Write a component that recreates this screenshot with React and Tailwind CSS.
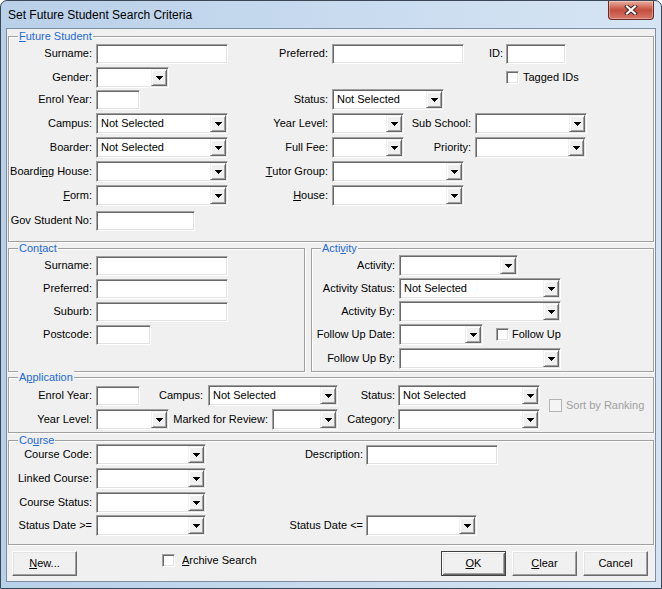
import React from 'react'

// classic 3D frames
const sunken =
  'border border-t-[#a0a0a0] border-l-[#a0a0a0] border-r-white border-b-white shadow-[inset_1px_1px_0_#696969,inset_-1px_-1px_0_#e3e3e3]'
const raised =
  'border border-t-[#f0f0f0] border-l-[#f0f0f0] border-r-[#696969] border-b-[#696969] shadow-[inset_1px_1px_0_#fff,inset_-1px_-1px_0_#a0a0a0]'
const buttonFrame =
  'border border-t-white border-l-white border-r-[#696969] border-b-[#696969] shadow-[inset_-1px_-1px_0_#a0a0a0,inset_1px_1px_0_#e3e3e3]'
const defaultFrame =
  'border border-[#404040] shadow-[inset_1px_1px_0_#fff,inset_-1px_-1px_0_#696969,inset_2px_2px_0_#e3e3e3,inset_-2px_-2px_0_#a0a0a0]'

function DownArrow() {
  return (
    <svg width="7" height="4" viewBox="0 0 7 4" shapeRendering="crispEdges" className="block">
      <path d="M0 0h7v1h-1v1h-1v1h-1v1h-1v-1h-1v-1h-1v-1h-1z" fill="#000" />
    </svg>
  )
}

function CloseGlyph() {
  return (
    <svg width="14" height="10" viewBox="0 0 14 10" className="block">
      <path d="M3 1.5L11 8.5M11 1.5L3 8.5" stroke="#3d2420" strokeWidth="4" strokeLinecap="square" />
      <path d="M3 1.5L11 8.5M11 1.5L3 8.5" stroke="#fff" strokeWidth="2.2" strokeLinecap="square" />
    </svg>
  )
}

function TextBox({ w }) {
  return <div className={`${w} h-[20px] shrink-0 bg-white ${sunken}`} />
}

function Combo({ w, value }) {
  return (
    <div className={`${w} h-[21px] shrink-0 bg-white p-px flex ${sunken}`}>
      <span className="flex-1 min-w-0 pl-[3px] flex items-center whitespace-nowrap overflow-hidden">
        {value}
      </span>
      <span className={`w-[16px] shrink-0 bg-[#f0f0f0] flex items-center justify-center ${raised}`}>
        <DownArrow />
      </span>
    </div>
  )
}

function Check({ disabled }) {
  if (disabled) {
    return <span className="w-[13px] h-[13px] shrink-0 border border-[#b4b4b4] bg-[#f4f4f4]" />
  }
  return <span className={`w-[13px] h-[13px] shrink-0 bg-white ${sunken}`} />
}

function Lbl({ w, pr = 'pr-[4px]', children }) {
  return (
    <span className={`${w} ${pr} shrink-0 flex justify-end whitespace-nowrap`}>{children}</span>
  )
}

function Row({ mt, children }) {
  return <div className={`flex items-center h-[21px] ${mt}`}>{children}</div>
}

function Group({ title, className, children }) {
  return (
    <div
      className={`relative border border-[#a0a0a0] shadow-[inset_1px_1px_0_#fff,1px_1px_0_#fff] ${className}`}
    >
      <span className="absolute -top-[7px] left-[9px] px-[1px] bg-[#f0f0f0] text-[#1e6ad6] leading-[13px] whitespace-nowrap">
        {title}
      </span>
      {children}
    </div>
  )
}

function Btn({ def, className = '', children }) {
  return (
    <div
      className={`w-[65px] h-[25px] shrink-0 flex items-center justify-center bg-[#f0f0f0] ${
        def ? defaultFrame : buttonFrame
      } ${className}`}
    >
      <span>{children}</span>
    </div>
  )
}

export default function App() {
  return (
    <div className="w-[662px] h-[589px] rounded-t-[7px] border border-[#3b4656] bg-linear-to-r from-[#b9d0e9] to-[#d6e5f4] px-[5px] pb-[6px] flex flex-col font-['Liberation_Sans',Arial,sans-serif] text-[11px] text-black">
      {/* Title bar */}
      <div className="h-[27px] shrink-0 flex items-start justify-between">
        <span className="pl-[2px] mt-[6px] leading-[16px] text-[12px] font-['Segoe_UI','Liberation_Sans',sans-serif] whitespace-nowrap">
          Set Future Student Search Criteria
        </span>
        <div className="mr-[2px] w-[46px] h-[19px] rounded-b-[4px] border border-t-0 border-[#6b2a22] bg-linear-to-b from-[#e7ad9f] via-[#c44e3e] to-[#d7786a] shadow-[inset_0_0_0_1px_rgba(255,255,255,0.3)] flex items-center justify-center">
          <CloseGlyph />
        </div>
      </div>

      {/* Client area */}
      <div className="flex-1 border border-[#7d8ea3] bg-[#f0f0f0] flex flex-col">
        {/* Future Student */}
        <Group
          title={
            <>
              <u>F</u>uture Student
            </>
          }
          className="mt-[7px] mx-[1px] h-[206px]"
        >
          <Row mt="mt-[6px]">
            <Lbl w="w-[87px]">Surname:</Lbl>
            <TextBox w="w-[132px]" />
            <Lbl w="w-[104px]">Preferred:</Lbl>
            <TextBox w="w-[132px]" />
            <Lbl w="w-[42px]" pr="pr-[3px]">ID:</Lbl>
            <TextBox w="w-[60px]" />
          </Row>
          <Row mt="mt-[3px]">
            <Lbl w="w-[87px]">Gender:</Lbl>
            <Combo w="w-[73px]" />
            <span className="ml-[337px] flex items-center">
              <Check />
              <span className="ml-[4px] whitespace-nowrap">Tagged IDs</span>
            </span>
          </Row>
          <Row mt="mt-[1px]">
            <Lbl w="w-[87px]">Enrol Year:</Lbl>
            <TextBox w="w-[44px]" />
            <Lbl w="w-[192px]">Status:</Lbl>
            <Combo w="w-[112px]" value="Not Selected" />
          </Row>
          <Row mt="mt-[3px]">
            <Lbl w="w-[87px]">Campus:</Lbl>
            <Combo w="w-[132px]" value="Not Selected" />
            <Lbl w="w-[104px]">Year Level:</Lbl>
            <Combo w="w-[72px]" />
            <Lbl w="w-[71px]">Sub School:</Lbl>
            <Combo w="w-[112px]" />
          </Row>
          <Row mt="mt-[3px]">
            <Lbl w="w-[87px]">Boarder:</Lbl>
            <Combo w="w-[132px]" value="Not Selected" />
            <Lbl w="w-[104px]">Full Fee:</Lbl>
            <Combo w="w-[72px]" />
            <Lbl w="w-[71px]">Priority:</Lbl>
            <Combo w="w-[111px]" />
          </Row>
          <Row mt="mt-[3px]">
            <Lbl w="w-[87px]">
              Boardi<u>n</u>g House:
            </Lbl>
            <Combo w="w-[132px]" />
            <Lbl w="w-[104px]">
              <u>T</u>utor Group:
            </Lbl>
            <Combo w="w-[132px]" />
          </Row>
          <Row mt="mt-[3px]">
            <Lbl w="w-[87px]">
              <u>F</u>orm:
            </Lbl>
            <Combo w="w-[132px]" />
            <Lbl w="w-[104px]">
              <u>H</u>ouse:
            </Lbl>
            <Combo w="w-[132px]" />
          </Row>
          <Row mt="mt-[4px]">
            <Lbl w="w-[87px]">Gov Student No:</Lbl>
            <TextBox w="w-[99px]" />
          </Row>
        </Group>

        {/* Contact + Activity */}
        <div className="mt-[6px] mx-[1px] flex">
          <Group
            title={
              <>
                Con<u>t</u>act
              </>
            }
            className="w-[297px] h-[124px] shrink-0"
          >
            <Row mt="mt-[6px]">
              <Lbl w="w-[87px]">Surname:</Lbl>
              <TextBox w="w-[132px]" />
            </Row>
            <Row mt="mt-[2px]">
              <Lbl w="w-[87px]">Preferred:</Lbl>
              <TextBox w="w-[132px]" />
            </Row>
            <Row mt="mt-[2px]">
              <Lbl w="w-[87px]">Suburb:</Lbl>
              <TextBox w="w-[132px]" />
            </Row>
            <Row mt="mt-[2px]">
              <Lbl w="w-[87px]">Postcode:</Lbl>
              <TextBox w="w-[55px]" />
            </Row>
          </Group>
          <Group
            title={
              <>
                Acti<u>v</u>ity
              </>
            }
            className="ml-[6px] flex-1 h-[124px]"
          >
            <Row mt="mt-[6px]">
              <Lbl w="w-[87px]">Activity:</Lbl>
              <Combo w="w-[119px]" />
            </Row>
            <Row mt="mt-[2px]">
              <Lbl w="w-[87px]">Activity Status:</Lbl>
              <Combo w="w-[162px]" value="Not Selected" />
            </Row>
            <Row mt="mt-[2px]">
              <Lbl w="w-[87px]">Activity By:</Lbl>
              <Combo w="w-[162px]" />
            </Row>
            <Row mt="mt-[2px]">
              <Lbl w="w-[87px]">Follow Up Date:</Lbl>
              <Combo w="w-[84px]" />
              <span className="ml-[13px] flex items-center">
                <Check />
                <span className="ml-[3px] whitespace-nowrap">Follow Up</span>
              </span>
            </Row>
            <Row mt="mt-[3px]">
              <Lbl w="w-[87px]">Follow Up By:</Lbl>
              <Combo w="w-[162px]" />
            </Row>
          </Group>
        </div>

        {/* Application */}
        <Group
          title={
            <>
              A<u>p</u>plication
            </>
          }
          className="mt-[5px] mx-[1px] h-[56px] flex items-start"
        >
          <div className="flex flex-col">
            <Row mt="mt-[7px]">
              <Lbl w="w-[87px]">Enrol Year:</Lbl>
              <TextBox w="w-[44px]" />
              <Lbl w="w-[68px]" pr="pr-[5px]">Campus:</Lbl>
              <Combo w="w-[130px]" value="Not Selected" />
              <Lbl w="w-[60px]" pr="pr-[3px]">Status:</Lbl>
              <Combo w="w-[142px]" value="Not Selected" />
            </Row>
            <Row mt="mt-[3px]">
              <Lbl w="w-[87px]">Year Level:</Lbl>
              <Combo w="w-[73px]" />
              <Lbl w="w-[103px]">Marked for Review:</Lbl>
              <Combo w="w-[66px]" />
              <Lbl w="w-[60px]" pr="pr-[3px]">Category:</Lbl>
              <Combo w="w-[142px]" />
            </Row>
          </div>
          <span className="ml-[9px] mt-[19px] flex items-center">
            <Check disabled />
            <span className="ml-[4px] whitespace-nowrap text-[#a0a0a0]">Sort by Ranking</span>
          </span>
        </Group>

        {/* Course */}
        <Group
          title={
            <>
              Co<u>u</u>rse
            </>
          }
          className="mt-[7px] mx-[1px] h-[105px]"
        >
          <Row mt="mt-[3px]">
            <Lbl w="w-[87px]">Course Code:</Lbl>
            <Combo w="w-[110px]" />
            <Lbl w="w-[160px]" pr="pr-[3px]">Description:</Lbl>
            <TextBox w="w-[132px]" />
          </Row>
          <Row mt="mt-[3px]">
            <Lbl w="w-[87px]">Linked Course:</Lbl>
            <Combo w="w-[110px]" />
          </Row>
          <Row mt="mt-[3px]">
            <Lbl w="w-[87px]">Course Status:</Lbl>
            <Combo w="w-[110px]" />
          </Row>
          <Row mt="mt-[2px]">
            <Lbl w="w-[87px]">Status Date &gt;=</Lbl>
            <Combo w="w-[110px]" />
            <Lbl w="w-[160px]" pr="pr-[3px]">Status Date &lt;=</Lbl>
            <Combo w="w-[111px]" />
          </Row>
        </Group>

        {/* Buttons */}
        <div className="mt-[6px] h-[25px] flex items-center">
          <Btn className="ml-[5px]">
            <u>N</u>ew...
          </Btn>
          <span className="ml-[85px] mb-[6px] flex items-center">
            <Check />
            <span className="ml-[7px] whitespace-nowrap">
              <u>A</u>rchive Search
            </span>
          </span>
          <div className="ml-auto mr-[7px] flex gap-[6px]">
            <Btn def>
              <u>O</u>K
            </Btn>
            <Btn>
              <u>C</u>lear
            </Btn>
            <Btn>Cancel</Btn>
          </div>
        </div>
      </div>
    </div>
  )
}
